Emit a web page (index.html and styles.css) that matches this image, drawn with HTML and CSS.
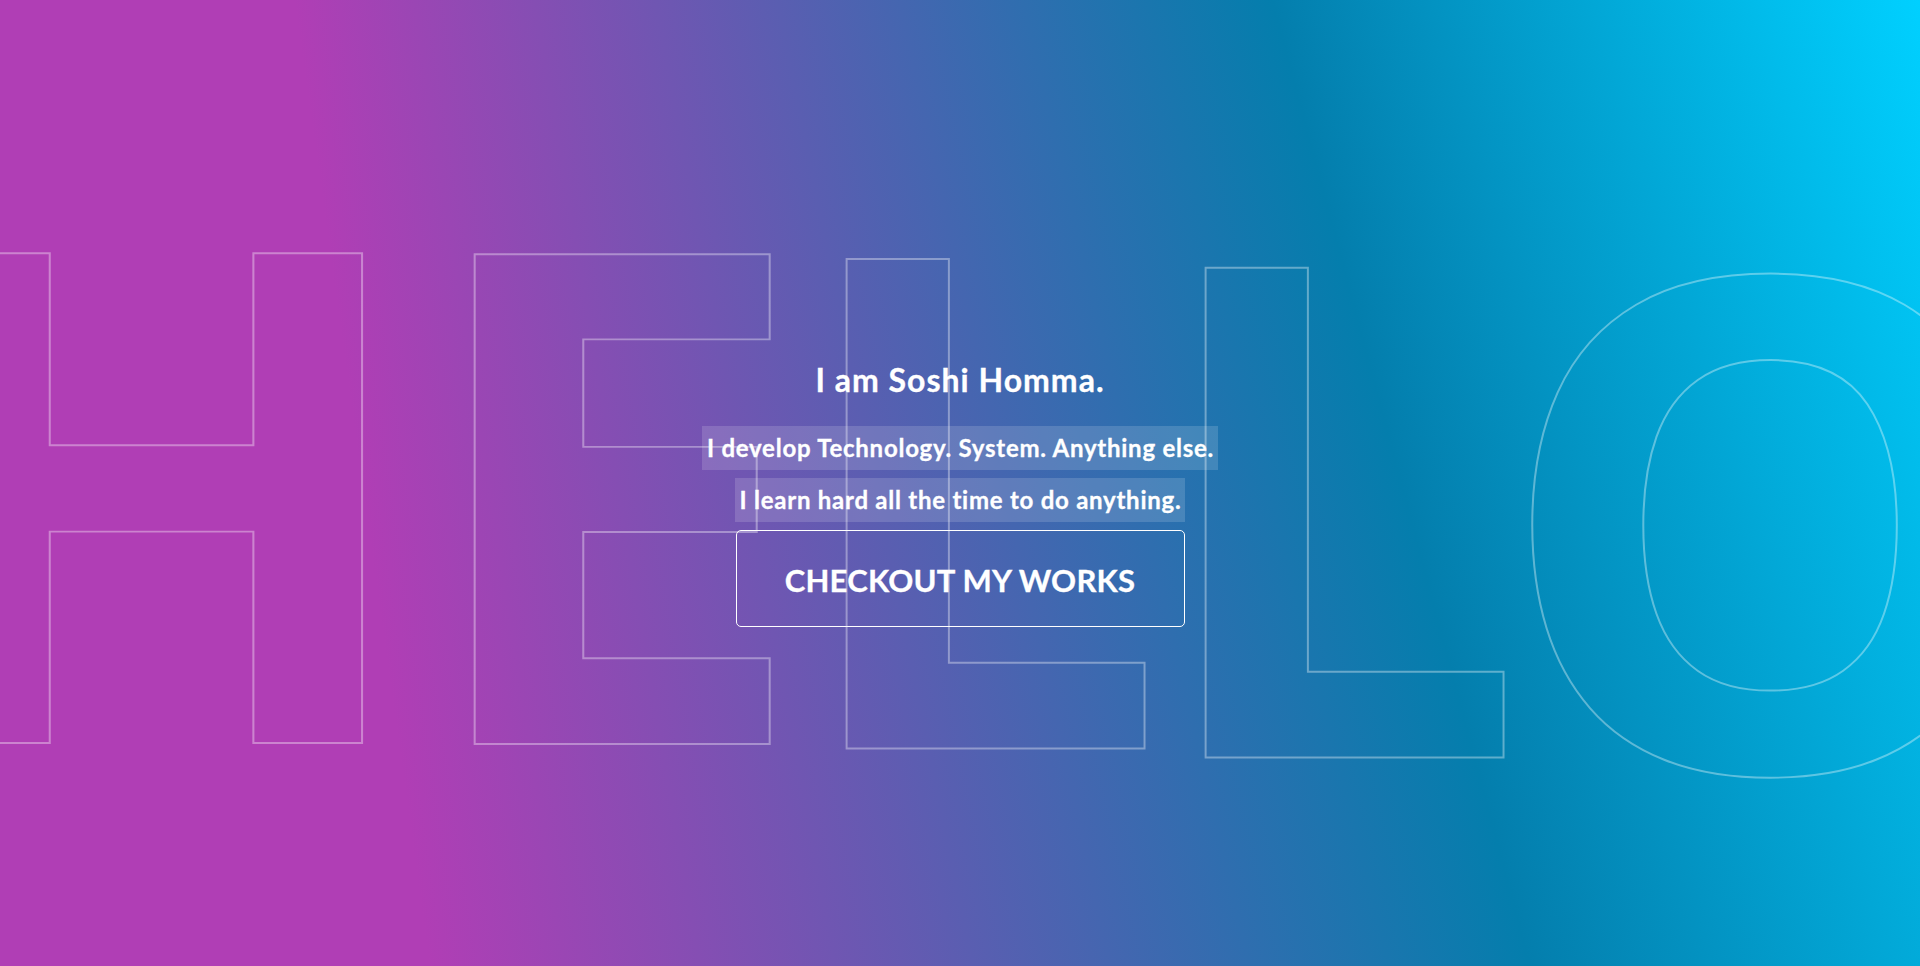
FILE: index.html
```html
<!DOCTYPE html>
<html lang="en">
<head>
<meta charset="utf-8">
<title>Soshi Homma</title>
<link rel="stylesheet" href="styles.css">
</head>
<body>
<main class="hero">
  <svg class="hello" width="1920" height="966" viewBox="0 0 1920 966" aria-hidden="true">
    <text class="glyph" transform="translate(-124 743) scale(1.05 1)">H</text>
    <text class="glyph" transform="translate(410.2 744) scale(1.046 1)">E</text>
    <text class="glyph" transform="translate(785.9 748.6) scale(0.985 1)">L</text>
    <text class="glyph" transform="translate(1144.9 757.5) scale(0.985 1)">L</text>
    <text class="glyph" transform="translate(1491.6 771) scale(1.02 1)">O</text>
  </svg>
  <div class="intro">
    <h1 class="name">I am Soshi Homma.</h1>
    <p class="line">I develop Technology. System. Anything else.</p>
    <p class="line">I learn hard all the time to do anything.</p>
    <a class="cta" href="#works">CHECKOUT MY WORKS</a>
  </div>
</main>
</body>
</html>
```

FILE: styles.css
```css
html, body {
  margin: 0;
  height: 100%;
}

body {
  font-family: Lato, "Open Sans", sans-serif;
  color: #fff;
  overflow: hidden;
}

.hero {
  position: relative;
  box-sizing: border-box;
  height: 100vh;
  padding-top: 21px;
  display: flex;
  align-items: center;
  justify-content: center;
  overflow: hidden;
  background: conic-gradient(from 0deg at -781px -7690px,
    #00d0ff 160.65deg,
    #047ead 165.05deg,
    #b03eb5 172.04deg);
}

.hello {
  position: absolute;
  top: 0;
  left: 0;
  pointer-events: none;
}

.glyph {
  font-family: "Open Sans", sans-serif;
  font-weight: 700;
  font-size: 686px;
  fill: none;
  stroke: rgba(255, 255, 255, 0.36);
  stroke-width: 2;
  vector-effect: non-scaling-stroke;
}

.intro {
  position: relative;
  display: flex;
  flex-direction: column;
  align-items: center;
  gap: 8px;
}

.name {
  margin: 0 0 18px;
  font-size: 32px;
  line-height: 40px;
  font-weight: 700;
  letter-spacing: 1px;
  -webkit-text-stroke: 0.3px #fff;
}

.line {
  margin: 0;
  padding: 4px 4px 4px 5px;
  font-size: 24px;
  line-height: 36px;
  font-weight: 700;
  letter-spacing: 0.75px;
  -webkit-text-stroke: 0.3px #fff;
  background: rgba(255, 255, 255, 0.15);
}

.cta {
  box-sizing: border-box;
  width: 449px;
  height: 97px;
  padding-top: 3px;
  display: flex;
  align-items: center;
  justify-content: center;
  border: 1px solid #fff;
  border-radius: 5px;
  color: #fff;
  text-decoration: none;
  font-size: 31px;
  font-weight: 700;
  letter-spacing: 0.25px;
  -webkit-text-stroke: 0.3px #fff;
}
```
